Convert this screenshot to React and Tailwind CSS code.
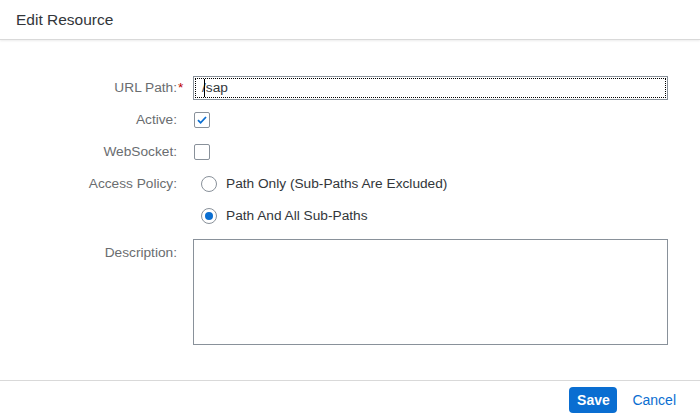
export default function App() {
  const font = { fontFamily: '"Liberation Sans", Arial, sans-serif' };
  return (
    <div className="w-[700px] h-[419px] bg-white flex flex-col text-[13.7px] text-[#32363a]" style={font}>
      <header className="h-[40px] shrink-0 flex items-center px-4 border-b border-[#d9d9d9] shadow-[0_1px_2px_rgba(0,0,0,0.08)]">
        <h1 className="text-[15.5px] text-[#32363a]">Edit Resource</h1>
      </header>

      <main className="flex-1 pt-8">
        <div className="flex items-center h-8">
          <label className="relative w-[177px] text-right text-[#6a6d70]">
            URL Path:
            <span className="absolute left-full ml-[1px] text-[#bb0000]">*</span>
          </label>
          <div className="ml-4 w-[475px] h-6 border border-[#89919a] bg-white p-[1px]">
            <div className="h-full w-full outline outline-1 outline-dotted outline-black -outline-offset-1 flex items-center pl-[7px]">
              <span className="relative">
                <span className="absolute left-[2px] top-[1px] bottom-[1px] w-px bg-black" />
                /sap
              </span>
            </div>
          </div>
        </div>

        <div className="flex items-center h-8">
          <label className="w-[177px] text-right text-[#6a6d70]">Active:</label>
          <div className="ml-[17px] w-4 h-4 border border-[#89919a] rounded-[2px] bg-white flex items-center justify-center">
            <svg width="12" height="12" viewBox="0 0 12 12" fill="none">
              <path d="M2 6.2 L4.6 8.8 L10 3" stroke="#0a6ed1" strokeWidth="1.8" />
            </svg>
          </div>
        </div>

        <div className="flex items-center h-8">
          <label className="w-[177px] text-right text-[#6a6d70]">WebSocket:</label>
          <div className="ml-[17px] w-4 h-4 border border-[#89919a] rounded-[2px] bg-white" />
        </div>

        <div className="flex items-center h-8">
          <label className="w-[177px] text-right text-[#6a6d70]">Access Policy:</label>
          <div className="ml-6 flex items-center gap-[9px]">
            <span className="w-4 h-4 rounded-full border border-[#89919a] bg-white" />
            <span>Path Only (Sub-Paths Are Excluded)</span>
          </div>
        </div>

        <div className="flex items-center h-8">
          <div className="w-[177px]" />
          <div className="ml-6 flex items-center gap-[9px]">
            <span className="w-4 h-4 rounded-full border border-[#89919a] bg-white flex items-center justify-center">
              <span className="w-2 h-2 rounded-full bg-[#0a6ed1]" />
            </span>
            <span>Path And All Sub-Paths</span>
          </div>
        </div>

        <div className="flex items-start mt-[7px]">
          <label className="w-[177px] text-right text-[#6a6d70] pt-[4px]">Description:</label>
          <textarea className="ml-4 w-[475px] h-[106px] border border-[#89919a] bg-white resize-none outline-none" />
        </div>
      </main>

      <footer className="h-[39px] shrink-0 border-t border-[#d9d9d9] flex items-center justify-end pr-4 gap-[7px]">
        <button className="h-[26px] w-[48px] rounded-[4px] bg-[#0a6ed1] text-white font-bold text-[14px]">Save</button>
        <button className="h-[26px] px-2 text-[#0a6ed1] text-[14px]">Cancel</button>
      </footer>
    </div>
  );
}
